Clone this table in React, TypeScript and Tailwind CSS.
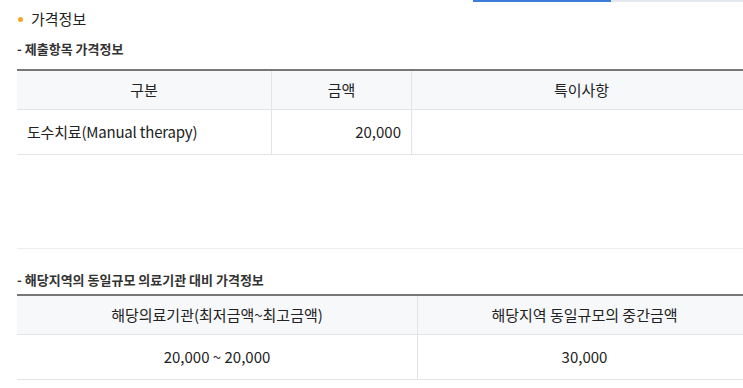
import React from "react";

export default function App() {
  return (
    <div
      className="relative w-[743px] h-[388px] overflow-hidden bg-white text-[#222]"
      style={{ fontFamily: '"Noto Sans CJK KR", "Noto Sans", sans-serif' }}
    >
      {/* top tab strip */}
      <div className="absolute left-[473px] top-0 h-[2px] w-[138px] bg-[#3b7dd8]" />
      <div className="absolute left-[611px] top-0 h-[2px] w-[140px] bg-[#e3e8ef]" />

      <div className="pl-[17px] pt-[8px]">
        <div className="flex items-center h-[22px]">
          <span className="w-[5px] h-[5px] rounded-full bg-[#f5a623] mr-[8px] ml-[1px]" />
          <span className="text-[15px] leading-[22px] text-[#222]">가격정보</span>
        </div>
        <div className="mt-[9px] h-[20px] text-[13px] leading-[20px] font-bold text-[#333]">- 제출항목 가격정보</div>
        <div className="mt-[10px] w-[734px]">
          <div className="border-t-[2px] border-[#777] flex h-[41px] bg-[#f7f8fa] border-b border-b-[#e4e4e4] text-[15px] text-[#222]">
            <div className="w-[255px] flex items-center justify-center border-r border-[#e4e4e4]">구분</div>
            <div className="w-[140px] flex items-center justify-center border-r border-[#e4e4e4]">금액</div>
            <div className="flex-1 flex items-center justify-center">특이사항</div>
          </div>
          <div className="flex h-[45px] border-b border-[#e4e4e4] text-[15px] text-[#222]">
            <div className="w-[255px] flex items-center pl-[10px] border-r border-[#e4e4e4] tracking-[-0.2px]">도수치료(Manual therapy)</div>
            <div className="w-[140px] flex items-center justify-end pr-[10px] border-r border-[#e4e4e4]">20,000</div>
            <div className="flex-1" />
          </div>
          <div className="h-[94px] border-b border-[#ececec]" />
        </div>
        <div className="mt-[21px] h-[20px] text-[13px] leading-[20px] font-bold text-[#333]">- 해당지역의 동일규모 의료기관 대비 가격정보</div>
        <div className="mt-[4px] w-[734px]">
          <div className="border-t-[2px] border-[#777] flex h-[41px] bg-[#f7f8fa] border-b border-b-[#e4e4e4] text-[15px] text-[#222]">
            <div className="w-[401px] flex items-center justify-center border-r border-[#e4e4e4]">해당의료기관(최저금액~최고금액)</div>
            <div className="flex-1 flex items-center justify-center">해당지역 동일규모의 중간금액</div>
          </div>
          <div className="flex h-[45px] border-b border-[#e4e4e4] text-[15px] text-[#222]">
            <div className="w-[401px] flex items-center justify-center border-r border-[#e4e4e4]">20,000 ~ 20,000</div>
            <div className="flex-1 flex items-center justify-center">30,000</div>
          </div>
        </div>
      </div>
    </div>
  );
}
